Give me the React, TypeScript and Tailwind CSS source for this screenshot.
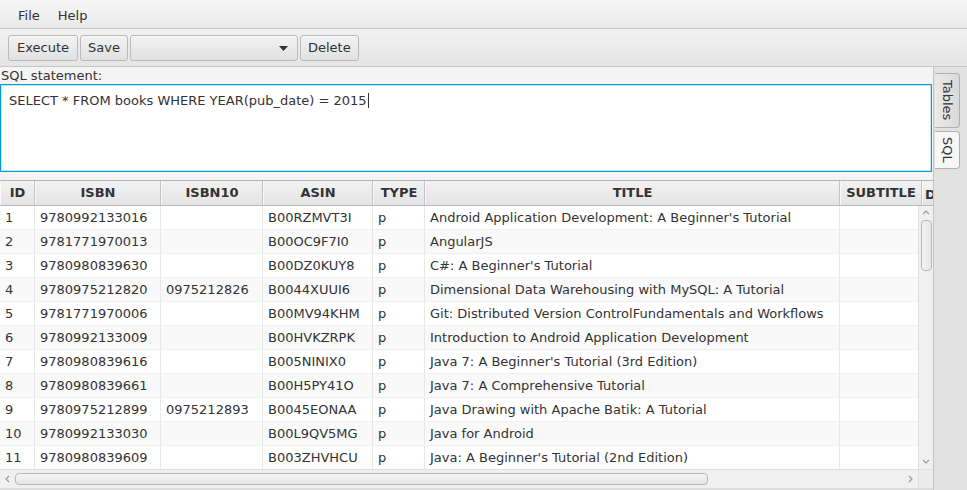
const FONT = { fontFamily: '"DejaVu Sans", "Noto Sans", sans-serif' };

type Book = {
  id: number | "";
  isbn: string;
  isbn10: string;
  asin: string;
  type: string;
  title: string;
};

const BOOKS: Book[] = [
  { id: 1, isbn: "9780992133016", isbn10: "", asin: "B00RZMVT3I", type: "p", title: "Android Application Development: A Beginner's Tutorial" },
  { id: 2, isbn: "9781771970013", isbn10: "", asin: "B00OC9F7I0", type: "p", title: "AngularJS" },
  { id: 3, isbn: "9780980839630", isbn10: "", asin: "B00DZ0KUY8", type: "p", title: "C#: A Beginner's Tutorial" },
  { id: 4, isbn: "9780975212820", isbn10: "0975212826", asin: "B0044XUUI6", type: "p", title: "Dimensional Data Warehousing with MySQL: A Tutorial" },
  { id: 5, isbn: "9781771970006", isbn10: "", asin: "B00MV94KHM", type: "p", title: "Git: Distributed Version ControlFundamentals and Workflows" },
  { id: 6, isbn: "9780992133009", isbn10: "", asin: "B00HVKZRPK", type: "p", title: "Introduction to Android Application Development" },
  { id: 7, isbn: "9780980839616", isbn10: "", asin: "B005NINIX0", type: "p", title: "Java 7: A Beginner's Tutorial (3rd Edition)" },
  { id: 8, isbn: "9780980839661", isbn10: "", asin: "B00H5PY41O", type: "p", title: "Java 7: A Comprehensive Tutorial" },
  { id: 9, isbn: "9780975212899", isbn10: "0975212893", asin: "B0045EONAA", type: "p", title: "Java Drawing with Apache Batik: A Tutorial" },
  { id: 10, isbn: "9780992133030", isbn10: "", asin: "B00L9QV5MG", type: "p", title: "Java for Android" },
  { id: 11, isbn: "9780980839609", isbn10: "", asin: "B003ZHVHCU", type: "p", title: "Java: A Beginner's Tutorial (2nd Edition)" },
];

// largeurs des colonnes, relevées sur la capture
const COLS = [
  { label: "ID", w: "w-[35px]" },
  { label: "ISBN", w: "w-[126px]" },
  { label: "ISBN10", w: "w-[102px]" },
  { label: "ASIN", w: "w-[110px]" },
  { label: "TYPE", w: "w-[52px]" },
  { label: "TITLE", w: "w-[415px]" },
  { label: "SUBTITLE", w: "w-[82px]" },
];

function ToolButton({ children, className = "" }: { children?: React.ReactNode; className?: string }) {
  return (
    <div
      className={`flex h-[26px] items-center rounded-[3px] border border-[#b9b9b9] bg-gradient-to-b from-[#f3f3f3] to-[#e1e1e1] px-[7px] text-[13px] text-[#333] shadow-[inset_0_1px_0_#fafafa] ${className}`}
    >
      {children}
    </div>
  );
}

function Chevron({ dir }: { dir: "up" | "down" | "left" | "right" }) {
  const d = {
    up: "M1 5 L4 2 L7 5",
    down: "M1 2 L4 5 L7 2",
    left: "M5 1 L2 4 L5 7",
    right: "M2 1 L5 4 L2 7",
  }[dir];
  return (
    <svg width="8" height="8" viewBox="0 0 8 8" className="block">
      <path d={d} fill="none" stroke="#9a9a9a" strokeWidth="1.1" />
    </svg>
  );
}

function Row({ book, odd }: { book: Book; odd: boolean }) {
  const cells = [String(book.id), book.isbn, book.isbn10, book.asin, book.type, book.title, ""];
  return (
    <div className={`flex h-[24px] border-b border-[#f0f0f0] ${odd ? "bg-[#f9f9f9]" : "bg-white"}`}>
      {COLS.map((c, i) => (
        <div
          key={c.label}
          className={`${c.w} flex shrink-0 items-center overflow-hidden whitespace-nowrap border-r border-[#e8e8e8] pl-[5px] text-[13px] text-[#333]`}
        >
          {cells[i]}
        </div>
      ))}
      <div className="flex-1" />
    </div>
  );
}

export default function App() {
  return (
    <div className="flex h-[490px] w-[967px] flex-col overflow-hidden bg-[#f4f4f4]" style={FONT}>
      {/* barre de menus */}
      <div className="flex h-[29px] shrink-0 items-center gap-[18px] border-b border-[#c6c6c6] bg-gradient-to-b from-[#f6f6f6] to-[#e9e9e9] pl-[18px] pt-[3px] text-[13px] text-[#333]">
        <span>File</span>
        <span>Help</span>
      </div>

      {/* barre d'outils */}
      <div className="flex h-[38px] shrink-0 items-center gap-[2px] border-b border-[#c6c6c6] bg-gradient-to-b from-[#f1f1f1] to-[#e5e5e5] pl-[8px] pt-px">
        <ToolButton className="px-[8px]">Execute</ToolButton>
        <ToolButton>Save</ToolButton>
        <ToolButton className="w-[168px] justify-end pr-[9px]">
          <svg width="9" height="5" viewBox="0 0 9 5">
            <path d="M0 0 H9 L4.5 5 Z" fill="#333" />
          </svg>
        </ToolButton>
        <ToolButton>Delete</ToolButton>
      </div>

      <div className="flex min-h-0 flex-1">
        {/* contenu de l'onglet SQL */}
        <div className="flex w-[934px] shrink-0 flex-col border-r border-[#c4c4c4]">
          <div className="h-[17px] pl-[1px] pt-px text-[13px] leading-[16px] text-[#333]">SQL statement:</div>
          <div className="mr-px h-[88px] shrink-0 border border-[#039ed3] bg-white px-[8px] pt-[3px] shadow-[inset_0_0_0_1px_#bfe6f4]">
            <span className="text-[13px] text-[#333]">SELECT * FROM books WHERE YEAR(pub_date) = 2015</span>
            <span className="ml-[1px] inline-block h-[15px] w-px translate-y-[3px] bg-[#333]" />
          </div>

          {/* table */}
          <div className="mt-[8px] flex min-h-0 flex-1 flex-col border-t border-[#b4b4b4] bg-white">
            <div className="flex h-[25px] shrink-0 overflow-hidden border-b border-[#b9b9b9] bg-gradient-to-b from-[#f3f3f3] to-[#e3e3e3]">
              {COLS.map((c) => (
                <div
                  key={c.label}
                  className={`${c.w} flex shrink-0 items-center justify-center whitespace-nowrap border-r border-l border-r-[#c3c3c3] border-l-[#fafafa] text-[13px] font-bold text-[#333]`}
                >
                  {c.label}
                </div>
              ))}
              <div className="flex-1 overflow-hidden border-l border-[#fafafa] pl-[2px] pt-[4px] text-[13px] font-bold text-[#333]">
                D
              </div>
            </div>
            <div className="flex min-h-0 flex-1">
              <div className="w-[918px] shrink-0 overflow-hidden">
                {BOOKS.map((b, i) => (
                  <Row key={b.id} book={b} odd={i % 2 === 1} />
                ))}
                <Row book={{ id: "", isbn: "", isbn10: "", asin: "", type: "", title: "" }} odd />
              </div>
              {/* barre de défilement verticale */}
              <div className="flex w-[15px] shrink-0 flex-col items-center border-l border-[#e0e0e0] bg-[#f0f0f0]">
                <div className="flex h-[14px] items-center justify-center">
                  <Chevron dir="up" />
                </div>
                <div className="h-[51px] w-[11px] rounded-[4px] border border-[#b7b7b7] bg-gradient-to-r from-[#f4f4f4] to-[#e6e6e6]" />
                <div className="flex-1" />
                <div className="flex h-[14px] items-center justify-center">
                  <Chevron dir="down" />
                </div>
              </div>
            </div>
            {/* barre de défilement horizontale */}
            <div className="flex h-[19px] shrink-0 border-t border-[#e0e0e0] bg-[#f0f0f0]">
              <div className="flex w-[918px] shrink-0 items-center">
                <div className="flex w-[15px] justify-center">
                  <Chevron dir="left" />
                </div>
                <div className="h-[12px] w-[693px] rounded-[4px] border border-[#b7b7b7] bg-gradient-to-b from-[#f6f6f6] to-[#e6e6e6]" />
                <div className="flex-1" />
                <div className="flex w-[15px] justify-center">
                  <Chevron dir="right" />
                </div>
              </div>
              <div className="flex-1 border-l border-[#e0e0e0] bg-[#ececec]" />
            </div>
            <div className="h-[2px] shrink-0 bg-[#dcdcdc]" />
          </div>
        </div>

        {/* onglets verticaux */}
        <div className="flex flex-1 flex-col bg-[#e2e2e2] pl-px pt-[6px]">
          <div className="flex h-[55px] w-[25px] items-center justify-center rounded-r-[4px] border border-l-0 border-[#b0b0b0] bg-gradient-to-r from-[#e9e9e9] to-[#dadada] text-[13px] text-[#333] [writing-mode:vertical-rl]">
            Tables
          </div>
          <div className="mt-[3px] flex h-[38px] w-[25px] items-center justify-center rounded-r-[4px] border border-l-0 border-[#b0b0b0] bg-[#f7f7f7] text-[13px] text-[#333] [writing-mode:vertical-rl]">
            SQL
          </div>
        </div>
      </div>
    </div>
  );
}
